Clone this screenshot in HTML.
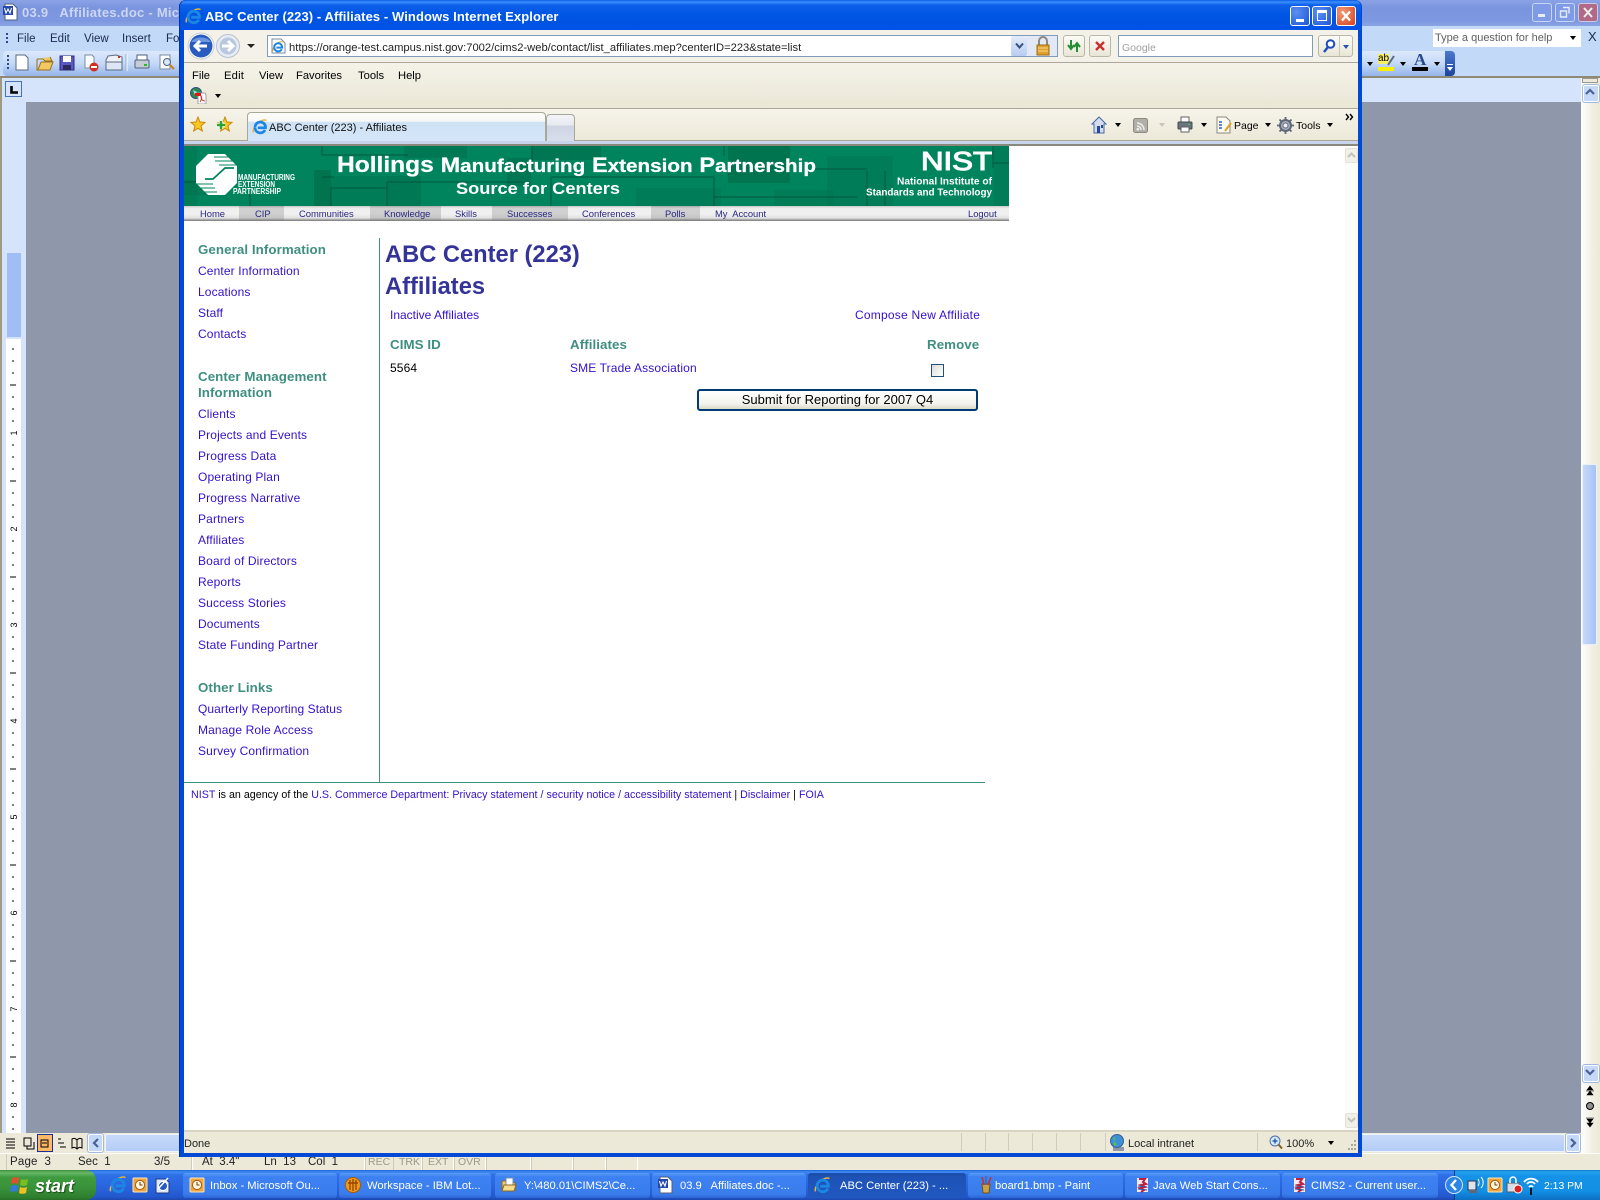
<!DOCTYPE html>
<html lang="en">
<head>
<meta charset="utf-8">
<title>ABC Center (223) - Affiliates - Windows Internet Explorer</title>
<style>
html,body{margin:0;padding:0;background:#ece9d8}
#s{position:relative;width:1600px;height:1200px;overflow:hidden;font-family:"Liberation Sans",Arial,sans-serif;font-size:12px;color:#000}
.a,.t,.l,.h{position:absolute}
.t,.l,.h{white-space:nowrap;line-height:14px}
.l{color:#3311cc;letter-spacing:.13px;left:198px}
.h{color:#3f8f80;font-weight:bold;font-size:13.33px;letter-spacing:.07px}
.n{position:absolute;top:207px;font-size:9.4px;line-height:14px;color:#27277f;white-space:nowrap}
.c{position:absolute;top:206px;height:15px;background:linear-gradient(#a9a9a9,#d0d0d0 15%,#cfcfcf 50%,#c4c4c4 80%,#777)}
.b{position:absolute;top:1173px;height:25px;border-radius:3px;background:linear-gradient(#5a9bf7,#3c81f3 15%,#3a7cec 85%,#2c64d4);color:#fff;font-size:11.2px;line-height:27px;white-space:nowrap}
.b span{position:absolute;left:28px;top:0}
.b svg{position:absolute;left:6px;top:4px}
.g{color:#9a9a8c}
.st{position:absolute;top:1154px;height:16px;border-left:1px solid #d0ccb8;border-right:1px solid #fff}
svg{position:absolute;display:block}
.ar{width:0;height:0;border-left:3px solid transparent;border-right:3px solid transparent;border-top:4px solid #000;position:absolute}
</style>
</head>
<body>
<div id="s">
<svg width="0" height="0" style="position:absolute">
<defs>
<symbol id="ie" viewBox="0 0 16 16"><path d="M1.500 13.500C0 11 4 4 10 1.500c2-.8 4-.8 4.500 0" fill="none" stroke="#e6b23c" stroke-width="1.400"/><path d="M3 8.800a5.300 5.300 0 0 1 10.500-1.400v1.400H5.800M13 11a5.300 5.300 0 0 1-10-2" fill="none" stroke="#1c86e4" stroke-width="2.700"/></symbol>
<symbol id="java" viewBox="0 0 16 16"><rect x="2" y="1" width="11" height="14" fill="#f4e9ee"/><path d="M4 2h6l-2 3 3 2-5 1 4 2-5 1 4 2-3 2" fill="none" stroke="#c02040" stroke-width="2"/><path d="M3 9l9 1M3 12l9 1" stroke="#3a50a0" stroke-width="1"/></symbol>
<symbol id="clock" viewBox="0 0 16 16"><rect x="1" y="1" width="14" height="14" rx="1" fill="#f0a640" stroke="#fbe6b8"/><circle cx="8" cy="8" r="4.600" fill="#fff6e0" stroke="#a85c10"/><path d="M8 5v3h2.500" fill="none" stroke="#703c08"/></symbol>
<symbol id="doc" viewBox="0 0 16 18"><path d="M2 1h8l4 4v12H2z" fill="#fff" stroke="#50607a"/><rect x="0" y="3" width="10" height="9" fill="#2848a8"/><path d="M1.500 5l1.500 5 2-4 2 4 1.500-5" fill="none" stroke="#fff" stroke-width="1.100"/></symbol>
<symbol id="folder" viewBox="0 0 16 16"><path d="M1 4h5l1 1.500h7v8H1z" fill="#f2cd6c" stroke="#8a6a20"/><rect x="5" y="1" width="7" height="8" fill="#fff" stroke="#7090b0"/><path d="M3 8h12l-2 6H1z" fill="#f7dc8c" stroke="#8a6a20"/></symbol>
<symbol id="lot" viewBox="0 0 16 16"><circle cx="8" cy="8" r="7.500" fill="#f09a18" stroke="#a85c08"/><path d="M5 3v10M8 2v12M11 3v10M3 6h10" stroke="#8c3c04" stroke-width="1.200" fill="none"/></symbol>
<symbol id="paint" viewBox="0 0 16 18"><path d="M4 8h8l-1 9H5z" fill="#c8a048" stroke="#705018"/><path d="M6 9L4 1M8 9V0M10 9l3-8" stroke-width="1.500" fill="none" stroke="#c83028"/><path d="M8 9V0" stroke="#2878d0" stroke-width="1.500"/></symbol>
<symbol id="arr" viewBox="0 0 12 12"><path d="M2 8l4-4 4 4" fill="none" stroke="#4a6396" stroke-width="2.200"/></symbol>
</defs>
</svg>

<!-- WORD WINDOW BEHIND -->
<div class="a" style="left:0;top:0;width:1600px;height:26px;background:linear-gradient(#8ba3e6,#7a95de 30%,#7d98e0 80%,#8aa3e2)"></div>
<svg style="left:3px;top:3px" width="16" height="18"><use href="#doc" width="16" height="18"/></svg>
<div class="t" style="left:22px;top:6px;color:#ccd5f2;font-weight:bold;font-size:13px;letter-spacing:.25px">03.9 &nbsp; Affiliates.doc - Mic</div>
<div class="a" style="left:1532px;top:3px;width:20px;height:19px;background:#7f9be8;border:1px solid #c8d6f2;border-radius:3px;box-sizing:border-box"></div>
<div class="a" style="left:1538px;top:14px;width:7px;height:3px;background:#e6ecfa"></div>
<div class="a" style="left:1555px;top:3px;width:20px;height:19px;background:#7f9be8;border:1px solid #c8d6f2;border-radius:3px;box-sizing:border-box"></div>
<svg style="left:1559px;top:6px" width="13" height="13"><path d="M4 1.500h6v6M1.500 5h6v6h-6z" fill="none" stroke="#e6ecfa" stroke-width="1.400"/></svg>
<div class="a" style="left:1578px;top:3px;width:20px;height:19px;background:#b06a88;border:1px solid #d0c8e0;border-radius:3px;box-sizing:border-box"></div>
<svg style="left:1582px;top:7px" width="12" height="11"><path d="M2 1l8 9M10 1l-8 9" stroke="#eee" stroke-width="2"/></svg>
<div class="a" style="left:0;top:26px;width:1600px;height:51px;background:#c3d9f8"></div>
<div class="a" style="left:6px;top:33px;width:2px;height:2px;background:#2c4a8c;box-shadow:0 4px #2c4a8c,0 8px #2c4a8c"></div>
<div class="t" style="left:17px;top:32px;color:#1a2a50;font-size:11.500px">File</div>
<div class="t" style="left:50px;top:32px;color:#1a2a50;font-size:11.500px">Edit</div>
<div class="t" style="left:84px;top:32px;color:#1a2a50;font-size:11.500px">View</div>
<div class="t" style="left:122px;top:32px;color:#1a2a50;font-size:11.500px">Insert</div>
<div class="t" style="left:166px;top:32px;color:#1a2a50;font-size:11.500px">Fo</div>
<div class="a" style="left:1433px;top:29px;width:148px;height:18px;background:#fff"></div>
<div class="t" style="left:1435px;top:31px;color:#606060;font-size:11px">Type a question for help</div>
<div class="ar" style="left:1570px;top:36px"></div>
<div class="t" style="left:1588px;top:30px;font-size:13px;color:#1a2a50">X</div>
<div class="a" style="left:3px;top:51px;width:177px;height:25px;border-radius:4px 0 0 4px;background:linear-gradient(#dce9fc,#c4d9f7 50%,#94b4e8)"></div>
<div class="a" style="left:7px;top:55px;width:2px;height:2px;background:#2c4a8c;box-shadow:0 4px #2c4a8c,0 8px #2c4a8c,0 12px #2c4a8c"></div>
<svg style="left:14px;top:53px" width="166" height="20">
<path d="M2 2h9l3 3v12H2z" fill="#fff" stroke="#5a6a80"/>
<path d="M23 6h6l2 2h7l-2-4M23 6v11h13l3-8H27l-3 8" fill="#f2c860" stroke="#9a7020"/>
<rect x="46" y="3" width="14" height="14" fill="#5a58c0" stroke="#2c2a80"/><rect x="49" y="3" width="8" height="6" fill="#fff"/><rect x="49" y="12" width="8" height="5" fill="#2c2a60"/>
<path d="M71 2h7l2 2v11H71z" fill="#fff" stroke="#7a8aa0"/><circle cx="80" cy="14" r="4.500" fill="#d03020"/><rect x="77" y="13" width="6" height="2" fill="#fff"/>
<path d="M94 3l8-1 6 2v11H92V7z" fill="#f0f2f8" stroke="#5a6a80"/><rect x="92" y="9" width="16" height="8" fill="#dde6f4" stroke="#5a6a80"/><rect x="104" y="3" width="2" height="2" fill="#d03020"/>
<path d="M113 1v17" stroke="#fff" stroke-width="1"/><path d="M112 1v17" stroke="#90a8d0"/>
<rect x="121" y="7" width="14" height="8" rx="1" fill="#c4ccd8" stroke="#50607a"/><rect x="123" y="2" width="10" height="5" fill="#fff" stroke="#50607a"/><rect x="130" y="11" width="3" height="2" fill="#20c020"/>
<path d="M146 2h10v14h-10z" fill="#fff" stroke="#7a8aa0"/><circle cx="153" cy="9" r="3.500" fill="#d8e8f8" stroke="#506080"/><path d="M156 12l4 4" stroke="#c88020" stroke-width="2"/>
</svg>
<div class="a" style="left:1362px;top:51px;width:93px;height:25px;border-radius:0 4px 4px 0;background:linear-gradient(#dce9fc,#c4d9f7 50%,#94b4e8)"></div>
<div class="a" style="left:1445px;top:51px;width:10px;height:25px;border-radius:0 4px 4px 0;background:linear-gradient(#4c78d0,#1c459c)"></div>
<div class="a" style="left:1447px;top:64px;width:6px;height:1px;background:#fff"></div>
<div class="ar" style="left:1447px;top:67px;border-top-color:#fff"></div>
<div class="ar" style="left:1367px;top:62px"></div><div class="ar" style="left:1400px;top:62px"></div><div class="ar" style="left:1434px;top:62px"></div>
<div class="a" style="left:1378px;top:67px;width:16px;height:4px;background:#f8f000"></div>
<div class="t" style="left:1378px;top:54px;font-size:10px;background:#f8f060;line-height:10px">ab</div>
<svg style="left:1386px;top:55px" width="10" height="12"><path d="M8 1L2 10" stroke="#5a6a80" stroke-width="2"/></svg>
<div class="t" style="left:1414px;top:52px;font-family:'Liberation Serif',serif;font-size:17px;color:#26488e;font-weight:bold;line-height:16px">A</div>
<div class="a" style="left:1412px;top:67px;width:16px;height:4px;background:#000"></div>
<div class="a" style="left:0;top:76px;width:1600px;height:2px;background:#8e8a74"></div>
<div class="a" style="left:0;top:78px;width:2px;height:1075px;background:#a09a84"></div>
<div class="a" style="left:2px;top:78px;width:1579px;height:24px;background:#d5e4fb"></div>
<div class="a" style="left:2px;top:102px;width:24px;height:1031px;background:#d5e4fb"></div>
<div class="a" style="left:26px;top:102px;width:1555px;height:1031px;background:#8f98ab"></div>
<div class="a" style="left:5px;top:81px;width:17px;height:16px;box-sizing:border-box;border:1px solid #4a72b8;background:#d5e4fb"></div>
<svg style="left:10px;top:86px" width="8" height="8"><path d="M1.500 0v6.500H8" fill="none" stroke="#000" stroke-width="2.600"/></svg>
<div class="a" style="left:7px;top:253px;width:14px;height:84px;background:#a0bef5"></div>
<svg style="left:6px;top:339px" width="15" height="794">
<defs><pattern id="ru" width="15" height="96" patternUnits="userSpaceOnUse"><rect width="15" height="96" fill="#fff"/><rect x="6" y="9.500" width="2" height="1" fill="#000"/><rect x="6" y="21.500" width="2" height="1" fill="#000"/><rect x="6" y="33.500" width="2" height="1" fill="#000"/><rect x="4" y="45.500" width="6" height="1" fill="#000"/><rect x="6" y="57.500" width="2" height="1" fill="#000"/><rect x="6" y="69.500" width="2" height="1" fill="#000"/><rect x="6" y="81.500" width="2" height="1" fill="#000"/></pattern></defs>
<rect width="15" height="794" fill="url(#ru)"/>
<g font-size="9" text-anchor="middle" font-family="Liberation Sans">
<text transform="translate(11,94) rotate(-90)">1</text><text transform="translate(11,190) rotate(-90)">2</text><text transform="translate(11,286) rotate(-90)">3</text><text transform="translate(11,382) rotate(-90)">4</text><text transform="translate(11,478) rotate(-90)">5</text><text transform="translate(11,574) rotate(-90)">6</text><text transform="translate(11,670) rotate(-90)">7</text><text transform="translate(11,766) rotate(-90)">8</text>
</g></svg>
<!-- word right scrollbar -->
<div class="a" style="left:1581px;top:78px;width:19px;height:1075px;background:linear-gradient(90deg,#fff,#f2efe2 60%,#ece9d8)"></div>
<div class="a" style="left:1582px;top:78px;width:16px;height:5px;background:#ece9d8;border:1px solid #999;box-sizing:border-box"></div>
<div class="a" style="left:1583px;top:85px;width:14px;height:15px;background:#c6d8f8;border:1px solid #fff;border-radius:2px;box-shadow:0 0 0 1px #a0b8e0"></div>
<svg style="left:1584px;top:86px" width="12" height="12"><use href="#arr" width="12" height="12"/></svg>
<div class="a" style="left:1582px;top:464px;width:15px;height:181px;background:linear-gradient(90deg,#c8dafa,#a6c1f4);border:1px solid #e8f0fc;box-sizing:border-box;border-radius:2px"></div>
<div class="a" style="left:1583px;top:1065px;width:14px;height:15px;background:#c6d8f8;border:1px solid #fff;border-radius:2px;box-shadow:0 0 0 1px #a0b8e0"></div>
<svg style="left:1584px;top:1066px;transform:rotate(180deg)" width="12" height="12"><use href="#arr" width="12" height="12"/></svg>
<svg style="left:1583px;top:1085px" width="14" height="50"><path d="M7 1l3 4H4zM3 6h8M4 10h6l-3-4z" fill="#000" stroke="#000" stroke-width=".6"/><circle cx="7" cy="21" r="3.500" fill="#909090" stroke="#000"/><path d="M3 33h8M7 42l3-4H4zM4 34h6l-3 4z" fill="#000" stroke="#000" stroke-width=".6"/></svg>
<!-- word bottom -->
<div class="a" style="left:0;top:1133px;width:1581px;height:20px;background:#ece9d8"></div>
<div class="a" style="left:37px;top:1134px;width:16px;height:18px;box-sizing:border-box;border:1px solid #1c2f8a;background:#fdb96a"></div>
<svg style="left:4px;top:1135px" width="84" height="16" stroke="#000" fill="none"><path d="M2 4h9M2 7h9M2 10h9M2 13h9"/><path d="M20 3h7v8h-7zM23 11v3h7V7"/><path d="M37 5h7v7h-7zM38 8h5"/><path d="M54 4h3M54 8h6M56 12h6"/><path d="M68 4c2-1 3-1 5 1 2-2 3-2 5-1v9c-2-1-3-1-5 1-2-2-3-2-5-1zM73 5v9"/></svg>
<div class="a" style="left:88px;top:1134px;width:15px;height:18px;background:#c6d8f8;border:1px solid #fff;box-sizing:border-box;border-radius:2px;box-shadow:0 0 0 1px #a0b8e0"></div>
<svg style="left:90px;top:1137px;transform:rotate(-90deg)" width="12" height="12"><use href="#arr" width="12" height="12"/></svg>
<div class="a" style="left:105px;top:1134px;width:1460px;height:18px;background:linear-gradient(#c8daf9,#b4ccf8);border:1px solid #eef3fd;box-sizing:border-box;border-radius:2px"></div>
<div class="a" style="left:1566px;top:1134px;width:14px;height:18px;background:#c6d8f8;border:1px solid #fff;box-sizing:border-box;border-radius:2px;box-shadow:0 0 0 1px #a0b8e0"></div>
<svg style="left:1567px;top:1137px;transform:rotate(90deg)" width="12" height="12"><use href="#arr" width="12" height="12"/></svg>
<!-- word status -->
<div class="a" style="left:0;top:1153px;width:1600px;height:17px;background:#ece9d8;border-top:1px solid #fff;box-sizing:border-box"></div>
<div class="st" style="left:6px;width:185px"></div><div class="st" style="left:191px;width:172px"></div><div class="st" style="left:365px;width:27px"></div><div class="st" style="left:393px;width:27px"></div><div class="st" style="left:422px;width:30px"></div><div class="st" style="left:454px;width:30px"></div><div class="st" style="left:486px;width:43px"></div><div class="st" style="left:531px;width:40px"></div><div class="st" style="left:573px;width:31px"></div><div class="st" style="left:606px;width:30px"></div>
<div class="t" style="left:10px;top:1155px;font-size:11.500px;color:#222;letter-spacing:.2px">Page&nbsp; 3</div>
<div class="t" style="left:78px;top:1155px;font-size:11.500px;color:#222">Sec&nbsp; 1</div>
<div class="t" style="left:154px;top:1155px;font-size:11.500px;color:#222">3/5</div>
<div class="t" style="left:202px;top:1155px;font-size:11.500px;color:#222">At&nbsp; 3.4"</div>
<div class="t" style="left:264px;top:1155px;font-size:11.500px;color:#222">Ln&nbsp; 13</div>
<div class="t" style="left:308px;top:1155px;font-size:11.500px;color:#222">Col&nbsp; 1</div>
<div class="t g" style="left:368px;top:1155px;font-size:10.500px">REC</div>
<div class="t g" style="left:399px;top:1155px;font-size:10.500px">TRK</div>
<div class="t g" style="left:428px;top:1155px;font-size:10.500px">EXT</div>
<div class="t g" style="left:458px;top:1155px;font-size:10.500px">OVR</div>

<!-- IE WINDOW -->
<div class="a" style="left:179px;top:0;width:1183px;height:1157px;background:#0049d4;border-radius:7px 7px 0 0;box-shadow:inset 1px 0 #0032a8"></div>
<div class="a" style="left:180px;top:0;width:1181px;height:30px;border-radius:7px 7px 0 0;background:linear-gradient(#0a5ae8,#3c8ffc 2px,#0d60ea 5px,#0056e4 14px,#0053e2 24px,#0052e8)"></div>
<svg style="left:185px;top:8px" width="17" height="17"><use href="#ie" width="17" height="17"/></svg>
<div class="t" style="left:205px;top:10px;color:#fff;font-weight:bold;font-size:13px;letter-spacing:.08px">ABC Center (223) - Affiliates - Windows Internet Explorer</div>
<div class="a" style="left:1290px;top:6px;width:20px;height:20px;box-sizing:border-box;border:1px solid #fff;border-radius:3px;background:radial-gradient(circle at 30% 30%,#5b8ff0,#1c55d8)"></div>
<div class="a" style="left:1296px;top:19px;width:8px;height:3px;background:#fff"></div>
<div class="a" style="left:1312px;top:6px;width:20px;height:20px;box-sizing:border-box;border:1px solid #fff;border-radius:3px;background:radial-gradient(circle at 30% 30%,#5b8ff0,#1c55d8)"></div>
<div class="a" style="left:1317px;top:10px;width:10px;height:11px;box-sizing:border-box;border:1px solid #fff;border-top-width:3px"></div>
<div class="a" style="left:1336px;top:6px;width:20px;height:20px;box-sizing:border-box;border:1px solid #fff;border-radius:3px;background:radial-gradient(circle at 30% 30%,#f09a78,#d8401c)"></div>
<svg style="left:1340px;top:10px" width="12" height="12"><path d="M2 1.500l8 9M10 1.500l-8 9" stroke="#fff" stroke-width="2.300"/></svg>

<div class="a" style="left:184px;top:30px;width:1174px;height:32px;background:#f4f2e8"></div>
<div class="a" style="left:184px;top:62px;width:1174px;height:1px;background:#aca899"></div>
<div class="a" style="left:184px;top:63px;width:1174px;height:45px;background:linear-gradient(#f5f3e9,#eae7d6)"></div>
<div class="a" style="left:184px;top:108px;width:1174px;height:1px;background:#aca899"></div>
<div class="a" style="left:184px;top:109px;width:1174px;height:31px;background:linear-gradient(#f6f4ea,#ece9d9)"></div>
<div class="a" style="left:184px;top:140px;width:1174px;height:1px;background:#aca899"></div>
<div class="a" style="left:184px;top:141px;width:1174px;height:3px;background:#c8d4ec"></div>
<div class="a" style="left:184px;top:144px;width:1174px;height:2px;background:#8a887c"></div>
<!-- nav buttons -->
<svg style="left:187px;top:32px" width="72" height="28">
<circle cx="14" cy="14" r="13" fill="#fff" stroke="#c8ccd8"/><circle cx="14" cy="14" r="11.500" fill="#2a5cc0"/><path d="M4 10a11 8 0 0 1 20 0z" fill="#86b0ec" opacity=".7"/><path d="M8 14h12M13 9l-5 5 5 5" fill="none" stroke="#fff" stroke-width="3"/>
<circle cx="41" cy="14" r="11.500" fill="#e8ecf4" stroke="#b8c0d0"/><circle cx="41" cy="14" r="8.500" fill="#b9c8de"/><path d="M35 14h11M41 9l5 5-5 5" fill="none" stroke="#fff" stroke-width="3"/>
<path d="M60 12h8l-4 4z" fill="#222"/></svg>
<!-- address -->
<div class="a" style="left:267px;top:35px;width:791px;height:22px;box-sizing:border-box;border:1px solid #7f9db9;background:#fff"></div>
<svg style="left:271px;top:38px" width="15" height="16"><path d="M1 1h9l4 4v10H1z" fill="#fff" stroke="#7a8aa0"/><use href="#ie" x="1" y="3" width="12" height="12"/></svg>
<div class="t" style="left:289px;top:41px;font-size:11.200px;color:#222">https://orange-test.campus.nist.gov:7002/cims2-web/contact/list_affiliates.mep?centerID=223&amp;state=list</div>
<div class="a" style="left:1011px;top:36px;width:16px;height:20px;background:linear-gradient(#e4ecfa,#b8ccf2);border-radius:2px"></div>
<svg style="left:1015px;top:42px" width="9" height="8"><path d="M1 1.500l3.500 4 3.500-4" fill="none" stroke="#34507f" stroke-width="2"/></svg>
<div class="a" style="left:1027px;top:36px;width:30px;height:20px;background:#e2e8f6"></div>
<svg style="left:1035px;top:36px" width="16" height="20"><path d="M4 9V5a4 4 0 0 1 8 0v4" fill="none" stroke="#8a8a80" stroke-width="2"/><rect x="2" y="9" width="12" height="10" fill="#e0a030" stroke="#a06c10"/><path d="M3 12h10M3 15h10" stroke="#f8d880"/></svg>
<div class="a" style="left:1063px;top:35px;width:22px;height:22px;box-sizing:border-box;border:1px solid #b8b8a8;border-radius:3px;background:linear-gradient(#fcfbf6,#e8e6d6)"></div>
<svg style="left:1066px;top:38px" width="16" height="16"><path d="M5 2v8M2 7l3 4 3-4" fill="none" stroke="#229030" stroke-width="2"/><path d="M11 14V6M8 9l3-4 3 4" fill="none" stroke="#229030" stroke-width="2"/></svg>
<div class="a" style="left:1089px;top:35px;width:22px;height:22px;box-sizing:border-box;border:1px solid #b8b8a8;border-radius:3px;background:linear-gradient(#fcfbf6,#e8e6d6)"></div>
<svg style="left:1094px;top:40px" width="12" height="12"><path d="M2 2l8 8M10 2l-8 8" stroke="#c83030" stroke-width="2.400"/></svg>
<div class="a" style="left:1118px;top:35px;width:195px;height:22px;box-sizing:border-box;border:1px solid #7f9db9;background:#fff"></div>
<div class="t" style="left:1122px;top:41px;font-size:10.500px;color:#a0a0a0">Google</div>
<div class="a" style="left:1318px;top:35px;width:35px;height:22px;box-sizing:border-box;border:1px solid #b8b8a8;border-radius:3px;background:linear-gradient(#fcfbf6,#e8e6d6)"></div>
<svg style="left:1321px;top:38px" width="16" height="16"><circle cx="9.500" cy="6" r="3.800" fill="#fff" stroke="#1c4cc0" stroke-width="2"/><path d="M7 9l-4 5" stroke="#1c4cc0" stroke-width="2.400"/></svg>
<div class="a" style="left:1339px;top:36px;width:1px;height:20px;background:#c8c8b8"></div>
<div class="ar" style="left:1343px;top:45px;border-top-color:#2850b0"></div>
<!-- menu -->
<div class="t" style="left:192px;top:69px;font-size:11.200px">File</div>
<div class="t" style="left:224px;top:69px;font-size:11.200px;letter-spacing:.2px">Edit</div>
<div class="t" style="left:259px;top:69px;font-size:11.200px">View</div>
<div class="t" style="left:296px;top:69px;font-size:11.200px">Favorites</div>
<div class="t" style="left:358px;top:69px;font-size:11.200px">Tools</div>
<div class="t" style="left:398px;top:69px;font-size:11.200px">Help</div>
<svg style="left:190px;top:87px" width="17" height="17"><circle cx="6" cy="6" r="5.500" fill="#2a8a50" stroke="#2a5080"/><path d="M3 3l4 2-2 3" fill="#b8d8f8"/><path d="M8 6h7l1 2v9H8z" fill="#fff" stroke="#a0a0a0"/><rect x="5" y="6" width="6" height="3" fill="#e01818"/><path d="M10 15c2-3 2-5 1-6 0 3 1 5 4 5" fill="none" stroke="#d03030"/></svg>
<div class="ar" style="left:215px;top:94px"></div>
<!-- tab row -->
<svg style="left:190px;top:116px" width="44" height="16"><path d="M8 1l2 5 5 .400-4 3.500 1.300 5.100L8 12.300 3.700 15 5 9.900 1 6.400 6 6z" fill="#f8c820" stroke="#c88810"/><path d="M35 1l2 5 5 .400-4 3.500 1.300 5.100L35 12.300 30.700 15 32 9.900 28 6.400 33 6z" fill="#f8c820" stroke="#c88810"/><path d="M27 9h8M31 5v8" stroke="#fff" stroke-width="4.500"/><path d="M27 9h8M31 5v8" stroke="#30a030" stroke-width="2.500"/></svg>
<div class="a" style="left:247px;top:112px;width:299px;height:29px;box-sizing:border-box;border:1px solid #a8a898;border-bottom:0;border-radius:4px 4px 0 0;background:linear-gradient(#fbfbf8,#f8f8f6 30%,#cfe2f5 32%,#d4e6f8)"></div>
<svg style="left:252px;top:119px" width="16" height="16"><use href="#ie" width="16" height="16"/></svg>
<div class="t" style="left:269px;top:121px;font-size:11px;color:#111">ABC Center (223) - Affiliates</div>
<div class="a" style="left:546px;top:114px;width:29px;height:27px;box-sizing:border-box;border:1px solid #a8a898;border-bottom:0;border-radius:4px 4px 0 0;background:linear-gradient(#f2f4f8,#e6e9ee 40%,#cdd4e2 41%,#d8deea)"></div>
<svg style="left:1091px;top:116px" width="16" height="18"><path d="M8 1L1 8h2v9h10V8h2z" fill="#d4dcf0" stroke="#4868a0"/><rect x="6" y="10" width="3" height="7" fill="#2848a0"/><rect x="10" y="9" width="2" height="3" fill="#2848a0"/></svg>
<div class="ar" style="left:1115px;top:123px"></div>
<svg style="left:1133px;top:118px" width="15" height="15"><rect x=".5" y=".5" width="14" height="14" rx="2" fill="#b0b0a8" stroke="#8a8a80"/><path d="M4 5a7 7 0 0 1 7 7M4 8a4 4 0 0 1 4 4" fill="none" stroke="#eee" stroke-width="1.500"/><circle cx="4.800" cy="11.200" r="1.300" fill="#eee"/></svg>
<div class="ar" style="left:1159px;top:123px;border-top-color:#c8c8b8"></div>
<svg style="left:1177px;top:116px" width="16" height="17"><rect x="4" y="1" width="8" height="6" fill="#fff" stroke="#606060"/><rect x="1" y="6" width="14" height="7" rx="1" fill="#6c7480" stroke="#404850"/><rect x="4" y="11" width="8" height="5" fill="#fff" stroke="#606060"/><rect x="11" y="8" width="2" height="1" fill="#30d030"/></svg>
<div class="ar" style="left:1201px;top:123px"></div>
<svg style="left:1216px;top:116px" width="16" height="18"><path d="M1 1h9l4 4v12H1z" fill="#fbfbf4" stroke="#8a8a80"/><path d="M3 6h3M3 9h3M3 12h3" stroke="#3060c0" stroke-width="1.400"/><path d="M15 7l-6 8" stroke="#e0a020" stroke-width="2"/></svg>
<div class="t" style="left:1234px;top:119px;font-size:10.500px">Page</div>
<div class="ar" style="left:1265px;top:123px"></div>
<svg style="left:1277px;top:117px" width="17" height="17"><circle cx="8.500" cy="8.500" r="5.500" fill="#a8b0c0" stroke="#606878" stroke-width="2"/><circle cx="8.500" cy="8.500" r="2.500" fill="#eef0f4" stroke="#606878"/><path d="M8.500 0v3M8.500 14v3M0 8.500h3M14 8.500h3M2.500 2.500l2 2M12.500 12.500l2 2M2.500 14.500l2-2M12.500 4.500l2-2" stroke="#606878" stroke-width="1.800"/></svg>
<div class="t" style="left:1296px;top:119px;font-size:10.500px">Tools</div>
<div class="ar" style="left:1327px;top:123px"></div>
<svg style="left:1345px;top:113px" width="9" height="8"><path d="M1 1l2.500 3L1 7M5 1l2.500 3L5 7" fill="none" stroke="#000" stroke-width="1.400"/></svg>

<!-- PAGE -->
<div class="a" style="left:184px;top:146px;width:1174px;height:984px;background:#fff"></div>
<svg style="left:184px;top:146px" width="825" height="60" font-family="Liberation Sans,sans-serif">
<rect width="825" height="60" fill="#00845e"/>
<g fill="#00734f">
<rect x="0" y="0" width="13" height="60" opacity=".5"/><rect x="0" y="34" width="26" height="15" opacity=".6"/><rect x="130" y="24" width="17" height="36"/><rect x="147" y="30" width="56" height="30" opacity=".5"/>
<rect x="203" y="30" width="34" height="30" opacity=".7"/><rect x="220" y="0" width="63" height="12" opacity=".7"/><rect x="323" y="12" width="24" height="28" opacity=".8"/><rect x="348" y="0" width="69" height="14" opacity=".8"/>
<rect x="544" y="0" width="62" height="37"/><rect x="643" y="10" width="66" height="50" opacity=".4"/><rect x="452" y="42" width="85" height="18" opacity=".4"/><rect x="590" y="44" width="60" height="16" opacity=".5"/><rect x="810" y="0" width="15" height="60" opacity=".4"/>
</g>
<g stroke="#00573e" fill="none" stroke-width="1">
<path d="M138 0v9h86M0 36h36M138 31h12M66 48v12M147 42h56M147 42v18M203 36h137M203 36v24M348 0v22M367 31h53M367 31v29M540 0v10M416 31h114M530 31v29M530 51h143M631 23h52M683 25v35M701 25v35M809 0v22M809 17h16"/>
</g>
<polygon points="24,8 41,8 53,20 53,37 41,49 24,49 12,37 12,20" fill="#fff"/>
<g stroke="#00845e" stroke-width="1.100" fill="none"><path d="M30 11h23M31 15h22M35 19h18M12 38h17M14 42h17M18 46h15"/><path d="M21 33h8l12-11h9" stroke-width="1.800"/></g>
<g fill="#fff" font-weight="bold" font-size="8">
<text x="54" y="34" textLength="57" lengthAdjust="spacingAndGlyphs">MANUFACTURING</text>
<text x="54" y="41" textLength="37" lengthAdjust="spacingAndGlyphs">EXTENSION</text>
<text x="49" y="48" textLength="48" lengthAdjust="spacingAndGlyphs">PARTNERSHIP</text>
</g>
<g fill="#fff" font-weight="bold">
<text x="153" y="26" font-size="22" textLength="479" lengthAdjust="spacingAndGlyphs" stroke="#fff" stroke-width=".25">Hollings <tspan font-size="21">M</tspan><tspan font-size="18.500">anufacturing</tspan> <tspan font-size="21">E</tspan><tspan font-size="18.500">xtension</tspan> <tspan font-size="21">P</tspan><tspan font-size="18.500">artnership</tspan></text>
<text x="272" y="48" font-size="17" textLength="164" lengthAdjust="spacingAndGlyphs">Source for Centers</text>
<text x="737" y="24" font-size="26" font-weight="normal" textLength="71" lengthAdjust="spacingAndGlyphs" stroke="#fff" stroke-width="1.100">NIST</text>
<text x="713" y="38.500" font-size="10.500" textLength="95" lengthAdjust="spacingAndGlyphs">National Institute of</text>
<text x="682" y="49.500" font-size="10.500" textLength="126" lengthAdjust="spacingAndGlyphs">Standards and Technology</text>
</g>
</svg>
<div class="a" style="left:184px;top:206px;width:825px;height:15px;background:linear-gradient(#c8c8c8,#ededed 15%,#f2f2f2 50%,#e2e2e2 80%,#777)"></div>
<div class="c" style="left:239px;width:45px"></div>
<div class="c" style="left:370px;width:71px"></div>
<div class="c" style="left:492px;width:76px"></div>
<div class="c" style="left:651px;width:49px"></div>
<div class="n" style="left:200px">Home</div>
<div class="n" style="left:255px">CIP</div>
<div class="n" style="left:299px">Communities</div>
<div class="n" style="left:384px">Knowledge</div>
<div class="n" style="left:455px">Skills</div>
<div class="n" style="left:507px">Successes</div>
<div class="n" style="left:582px">Conferences</div>
<div class="n" style="left:665px">Polls</div>
<div class="n" style="left:715px">My&nbsp; Account</div>
<div class="n" style="left:968px">Logout</div>

<div class="h" style="left:198px;top:243px">General Information</div>
<div class="l" style="top:264px">Center Information</div>
<div class="l" style="top:285px">Locations</div>
<div class="l" style="top:306px">Staff</div>
<div class="l" style="top:327px">Contacts</div>
<div class="h" style="left:198px;top:370px">Center Management</div>
<div class="h" style="left:198px;top:386px">Information</div>
<div class="l" style="top:407px">Clients</div>
<div class="l" style="top:428px">Projects and Events</div>
<div class="l" style="top:449px">Progress Data</div>
<div class="l" style="top:470px">Operating Plan</div>
<div class="l" style="top:491px">Progress Narrative</div>
<div class="l" style="top:512px">Partners</div>
<div class="l" style="top:533px">Affiliates</div>
<div class="l" style="top:554px">Board of Directors</div>
<div class="l" style="top:575px">Reports</div>
<div class="l" style="top:596px">Success Stories</div>
<div class="l" style="top:617px">Documents</div>
<div class="l" style="top:638px">State Funding Partner</div>
<div class="h" style="left:198px;top:681px">Other Links</div>
<div class="l" style="top:702px;letter-spacing:.08px">Quarterly Reporting Status</div>
<div class="l" style="top:723px">Manage Role Access</div>
<div class="l" style="top:744px">Survey Confirmation</div>

<div class="a" style="left:379px;top:238px;width:1px;height:544px;background:#3f8f80"></div>
<div class="a" style="left:184px;top:782px;width:801px;height:1px;background:#3f8f80"></div>
<div class="t" style="left:385px;top:242px;font-size:23.700px;line-height:26px;font-weight:bold;color:#333399">ABC Center (223)</div>
<div class="t" style="left:385px;top:274px;font-size:23.700px;line-height:26px;font-weight:bold;color:#333399">Affiliates</div>
<div class="l" style="left:390px;top:308px;letter-spacing:0">Inactive Affiliates</div>
<div class="l" style="left:855px;top:308px;letter-spacing:.22px">Compose New Affiliate</div>
<div class="h" style="left:390px;top:338px">CIMS ID</div>
<div class="h" style="left:570px;top:338px">Affiliates</div>
<div class="h" style="left:927px;top:338px">Remove</div>
<div class="t" style="left:390px;top:361px;letter-spacing:.13px">5564</div>
<div class="l" style="left:570px;top:361px">SME Trade Association</div>
<div class="a" style="left:931px;top:364px;width:13px;height:13px;box-sizing:border-box;border:1px solid #1c5180;background:linear-gradient(135deg,#dcdcd7,#fff)"></div>
<div class="a" style="left:697px;top:389px;width:281px;height:22px;box-sizing:border-box;border:2px solid #003c74;border-radius:3px;background:linear-gradient(#fff,#f4f4ee 70%,#dcd8c8);text-align:center;font-size:13px;line-height:18px;color:#000">Submit for Reporting for 2007 Q4</div>

<div class="t" style="left:191px;top:788px;font-size:10.670px;color:#000;letter-spacing:.03px"><span style="color:#3311cc">NIST</span> is an agency of the <span style="color:#3311cc">U.S. Commerce Department: Privacy statement / security notice / accessibility statement</span> | <span style="color:#3311cc">Disclaimer</span> | <span style="color:#3311cc">FOIA</span></div>

<!-- page scrollbar -->
<div class="a" style="left:1345px;top:146px;width:13px;height:984px;background:#fbfbf8"></div>
<div class="a" style="left:1345px;top:148px;width:13px;height:15px;box-sizing:border-box;border:1px solid #e4e2d8;background:#f1f0e8;border-radius:2px"></div>
<svg style="left:1346px;top:149px" width="11" height="12"><path d="M2 8l3.500-3.500L9 8" fill="none" stroke="#c4c2b8" stroke-width="2"/></svg>
<div class="a" style="left:1345px;top:1113px;width:13px;height:15px;box-sizing:border-box;border:1px solid #e4e2d8;background:#f1f0e8;border-radius:2px"></div>
<svg style="left:1346px;top:1114px" width="11" height="12"><path d="M2 4l3.500 3.500L9 4" fill="none" stroke="#c4c2b8" stroke-width="2"/></svg>
<!-- IE status -->
<div class="a" style="left:184px;top:1130px;width:1174px;height:23px;background:#ece9d8;border-top:2px solid #d8d4c4;box-sizing:border-box"></div>
<div class="t" style="left:184px;top:1137px;font-size:11px;color:#222">Done</div>
<div class="a" style="left:961px;top:1133px;width:1px;height:18px;background:#cfcdc0;box-shadow:24px 0 #cfcdc0,47px 0 #cfcdc0,71px 0 #cfcdc0,95px 0 #cfcdc0,119px 0 #cfcdc0,144px 0 #cfcdc0,296px 0 #cfcdc0"></div>
<svg style="left:1109px;top:1134px" width="17" height="18"><rect x="4" y="13" width="11" height="4" fill="#9098a8"/><circle cx="8" cy="7" r="6.500" fill="#3c90d8" stroke="#386090"/><path d="M4 3c3 0 3 3 1 5s1 4 3 4" fill="#5cc050"/></svg>
<div class="t" style="left:1128px;top:1137px;font-size:11px;color:#222">Local intranet</div>
<svg style="left:1269px;top:1135px" width="14" height="15"><circle cx="6" cy="6" r="5" fill="#d8e8f8" stroke="#4870a8"/><path d="M3.500 6h5M6 3.500v5" stroke="#2860b0" stroke-width="1.500"/><path d="M9.500 9.500l3.500 4" stroke="#806020" stroke-width="2"/></svg>
<div class="t" style="left:1286px;top:1137px;font-size:11px;color:#222">100%</div>
<div class="ar" style="left:1328px;top:1141px"></div>
<svg style="left:1347px;top:1140px" width="10" height="11" fill="#a8a698"><rect x="7" y="0" width="2" height="2"/><rect x="4" y="4" width="2" height="2"/><rect x="7" y="4" width="2" height="2"/><rect x="1" y="8" width="2" height="2"/><rect x="4" y="8" width="2" height="2"/><rect x="7" y="8" width="2" height="2"/></svg>

<!-- TASKBAR -->
<div class="a" style="left:0;top:1170px;width:1600px;height:30px;background:linear-gradient(#1f62d8,#3e8bf2 2px,#2e6fe6 5px,#2a66df 50%,#2459cf 88%,#1c48b0)"></div>
<div class="a" style="left:0;top:1170px;width:96px;height:30px;border-radius:0 10px 10px 0;background:linear-gradient(#3f8f3f,#67b867 3px,#3f9b3f 7px,#399239 60%,#2f7f2f 90%,#276f27)"></div>
<svg style="left:10px;top:1175px" width="20" height="20"><path d="M2 3c3-1 5-1 7 0l-1 6C6 8 4 8 1 9z" fill="#e0502a"/><path d="M11 4c2 1 4 1 7 0l-1 6c-3 1-5 1-7 0z" fill="#78c020"/><path d="M1 11c3-1 5-1 7 0l-1 6c-2-1-4-1-7 0z" fill="#3478e0"/><path d="M10 12c2 1 4 1 7 0l-1 6c-3 1-5 1-7 0z" fill="#f0c020"/></svg>
<div class="t" style="left:35px;top:1176px;color:#fff;font-size:18px;line-height:20px;font-weight:bold;font-style:italic;text-shadow:1px 1px 1px #1c4c1c">start</div>
<svg style="left:109px;top:1176px" width="18" height="18"><use href="#ie" width="18" height="18"/></svg>
<svg style="left:132px;top:1177px" width="16" height="16"><use href="#clock" width="16" height="16"/></svg>
<svg style="left:154px;top:1176px" width="17" height="18"><path d="M2 3h9l4 3v11H2z" fill="#dce6f8" stroke="#203c80"/><circle cx="9" cy="10" r="4.500" fill="#2858c8" stroke="#fff"/><path d="M4 13L14 2" stroke="#fff" stroke-width="1.500"/></svg>

<div class="b" style="left:183px;width:154px"><svg width="16" height="16"><use href="#clock" width="16" height="16"/></svg><span style="left:27px">Inbox - Microsoft Ou...</span></div>
<div class="b" style="left:339px;width:152px"><svg width="16" height="16"><use href="#lot" width="16" height="16"/></svg><span>Workspace - IBM Lot...</span></div>
<div class="b" style="left:495px;width:155px"><svg width="16" height="16"><use href="#folder" width="16" height="16"/></svg><span style="left:29px">Y:\480.01\CIMS2\Ce...</span></div>
<div class="b" style="left:652px;width:154px"><svg width="16" height="18" style="top:3px"><use href="#doc" width="16" height="18"/></svg><span>03.9 &nbsp; Affiliates.doc -...</span></div>
<div class="b" style="left:808px;width:158px;background:linear-gradient(#1a4da8,#1e52b7 20%,#2058c0)"><svg width="17" height="17"><use href="#ie" width="17" height="17"/></svg><span style="left:32px">ABC Center (223) - ...</span></div>
<div class="b" style="left:968px;width:155px"><svg width="16" height="18" style="left:10px;top:3px"><use href="#paint" width="16" height="18"/></svg><span style="left:27px">board1.bmp - Paint</span></div>
<div class="b" style="left:1125px;width:155px"><svg width="16" height="16" style="left:10px"><use href="#java" width="16" height="16"/></svg><span>Java Web Start Cons...</span></div>
<div class="b" style="left:1282px;width:156px"><svg width="16" height="16" style="left:10px"><use href="#java" width="16" height="16"/></svg><span style="left:29px">CIMS2 - Current user...</span></div>

<div class="a" style="left:1454px;top:1170px;width:146px;height:30px;background:linear-gradient(#1278cf,#22a2ee 2px,#1592e6 6px,#1390e4 70%,#0d6fc4);border-left:1px solid #0c3d90;box-sizing:border-box"></div>
<svg style="left:1444px;top:1175px" width="20" height="20"><circle cx="10" cy="10" r="8.500" fill="#2c84e4" stroke="#d0e4f8"/><path d="M12 5l-4.500 5 4.500 5" fill="none" stroke="#fff" stroke-width="2.400"/></svg>
<svg style="left:1466px;top:1174px" width="118" height="22">
<rect x="2" y="7" width="8" height="9" fill="#e0e4ec" stroke="#28324c"/><rect x="3" y="16" width="8" height="3" fill="#606878"/><path d="M12 5a6 6 0 0 1 0 7M15 3a8 8 0 0 1 0 11" stroke="#fff" fill="none"/>
<use href="#clock" x="21" y="3" width="16" height="16"/>
<path d="M41 9h12v9H41z" fill="#d8dce4" stroke="#505868"/><path d="M44 9V6a3 3 0 0 1 6 0v3" fill="none" stroke="#fff" stroke-width="1.500"/><circle cx="52" cy="15" r="4" fill="#e02020" stroke="#fff"/>
<path d="M58 8a9 9 0 0 1 14 0M61 10a5 5 0 0 1 8 0M63 13a2.500 2.500 0 0 1 4 0" fill="none" stroke="#fff" stroke-width="1.800"/><path d="M65 14v7" stroke="#101820" stroke-width="2"/>
</svg>
<div class="t" style="left:1544px;top:1180px;color:#fff;font-size:10.400px">2:13 PM</div>
</div>
</body>
</html>
